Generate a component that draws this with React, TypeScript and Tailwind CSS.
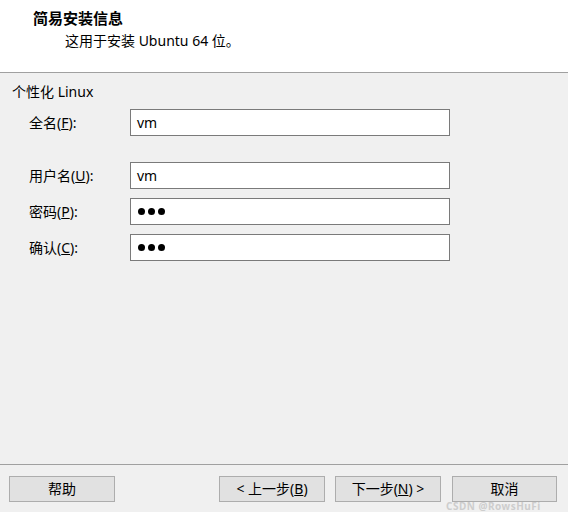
export default function App() {
  const font = "font-['Noto_Sans','Noto_Sans_CJK_SC',sans-serif]";

  return (
    <div className={`relative w-[568px] h-[512px] bg-[#f0f0f0] text-[14px] text-black flex flex-col ${font}`}>
      {/* 顶部说明 */}
      <div className="h-[73px] bg-white border-b border-[#a0a0a0] pt-[7px] pl-[33px]">
        <div className="font-bold text-[15px] leading-[22px]">简易安装信息</div>
        <div className="pl-[32px] mt-[2px] leading-[20px]">这用于安装 Ubuntu 64 位。</div>
      </div>

      {/* 表单 */}
      <div className="flex-1 pl-[12px]">
        <div className="mt-[9px] leading-[20px]">个性化 Linux</div>
        <Row label="全名" hotkey="F" className="mt-[7px]">
          <span>vm</span>
        </Row>
        <Row label="用户名" hotkey="U" className="mt-[26px]">
          <span>vm</span>
        </Row>
        <Row label="密码" hotkey="P" className="mt-[9px]">
          <Dots />
        </Row>
        <Row label="确认" hotkey="C" className="mt-[9px]">
          <Dots />
        </Row>
      </div>

      {/* 底部按钮 */}
      <div className="h-[48px] border-t border-[#a0a0a0] pt-[11px] flex pl-[9px] pr-[11px]">
        <Btn className="w-[106px]">帮助</Btn>
        <div className="flex-1" />
        <Btn className="w-[106px]">
          &lt; 上一步(<u>B</u>)
        </Btn>
        <Btn className="w-[106px] ml-[10px]">
          下一步(<u>N</u>) &gt;
        </Btn>
        <Btn className="w-[105px] ml-[11px]">取消</Btn>
      </div>

      {/* 水印 */}
      <div className="absolute left-[446px] top-[501px] text-[10px] leading-[11px] text-[#cdcdcd] font-bold tracking-[0.5px] pointer-events-none">
        CSDN @RowsHuFi
      </div>
    </div>
  );
}

function Row({
  label,
  hotkey,
  className,
  children,
}: {
  label: string;
  hotkey: string;
  className?: string;
  children: React.ReactNode;
}) {
  return (
    <div className={`flex items-center ${className ?? ''}`}>
      <div className="w-[118px] pl-[17px] leading-[20px]">
        {label}(<u>{hotkey}</u>):
      </div>
      <div className="w-[320px] h-[27px] bg-white border border-[#7a7a7a] flex items-center pl-[6px] leading-[20px]">
        {children}
      </div>
    </div>
  );
}

function Dots() {
  return (
    <div className="flex gap-[3px] pl-[1px]">
      <div className="w-[7px] h-[7px] rounded-full bg-black" />
      <div className="w-[7px] h-[7px] rounded-full bg-black" />
      <div className="w-[7px] h-[7px] rounded-full bg-black" />
    </div>
  );
}

function Btn({ className, children }: { className?: string; children: React.ReactNode }) {
  return (
    <button className={`h-[26px] bg-[#e1e1e1] border border-[#adadad] leading-[20px] ${className ?? ''}`}>
      {children}
    </button>
  );
}
